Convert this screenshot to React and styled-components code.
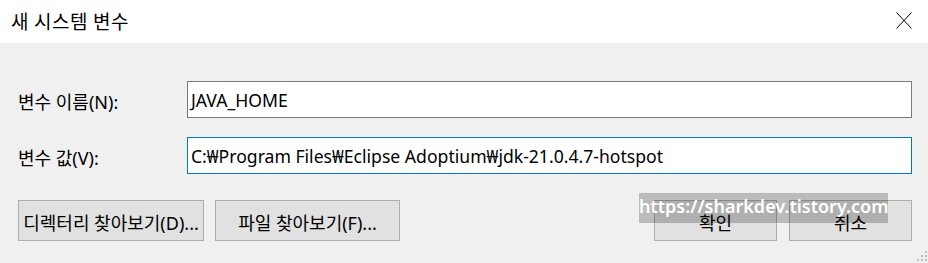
import React from 'react';
import styled, { createGlobalStyle } from 'styled-components';

const GlobalStyle = createGlobalStyle`
    html, body {
        margin: 0;
        padding: 0;
        background: #f0f0f0;
    }
    body {
        font-family: "Noto Sans", "Noto Sans CJK KR", sans-serif;
        color: #000;
    }
`;

const Window = styled.div`
    position: relative;
    width: 928px;
    height: 263px;
    display: flex;
    flex-direction: column;
    background: #f0f0f0;
    overflow: hidden;
`;

const TitleBar = styled.header`
    height: 43px;
    background: #fff;
    display: flex;
    align-items: center;
    justify-content: space-between;
    padding: 0 15px 0 11px;
    box-sizing: border-box;
`;

const Title = styled.span`
    font-family: "Noto Sans CJK KR", sans-serif;
    font-size: 19px;
    letter-spacing: 0.6px;
    margin-top: -2px;
`;

const CloseButton = styled.button`
    width: 18px;
    height: 18px;
    padding: 0;
    border: none;
    background: none;
    display: flex;
    align-items: center;
    justify-content: center;
    margin-top: -2px;
`;

const Body = styled.main`
    flex: 1;
    display: flex;
    flex-direction: column;
    padding: 38px 16px 0 18px;
`;

const FieldRow = styled.div`
    display: grid;
    grid-template-columns: 169px 1fr;
    align-items: center;
    height: 37px;
    margin-bottom: ${p => p.$gap}px;
`;

const Label = styled.label`
    font-size: 18px;
    font-family: "Noto Sans", "Noto Sans CJK KR", sans-serif;
    margin-top: 2px;
`;

const TextInput = styled.div`
    height: 37px;
    box-sizing: border-box;
    background: #fff;
    border: 1px solid ${p => (p.$focused ? '#0078d7' : '#7a7a7a')};
    display: flex;
    align-items: center;
    padding-left: 3px;
    font-size: 17.6px;
    white-space: nowrap;
    overflow: hidden;
`;

const ButtonRow = styled.div`
    display: flex;
    align-items: center;
    gap: 11px;
`;

const Spacer = styled.div`
    flex: 1;
`;

const Button = styled.button`
    width: ${p => p.$width}px;
    height: 41px;
    box-sizing: border-box;
    background: #e1e1e1;
    border: 1px solid #adadad;
    font-family: "Noto Sans", "Noto Sans CJK KR", sans-serif;
    font-size: 18px;
    color: #000;
    padding: 2px 0 0;
    white-space: nowrap;
    overflow: hidden;
`;

const Watermark = styled.div`
    position: absolute;
    left: 639px;
    top: 193px;
    width: 249px;
    height: 30px;
    background: rgba(0, 0, 0, 0.22);
    color: #fff;
    font-family: "Noto Sans", sans-serif;
    font-weight: 600;
    font-size: 18px;
    line-height: 26px;
    text-align: center;
    white-space: nowrap;
    pointer-events: none;
`;

const Grip = styled.svg`
    position: absolute;
    right: 0;
    bottom: 0;
`;

const gripDots = [
    [10, 0],
    [6, 4], [10, 4],
    [2, 8], [6, 8], [10, 8],
];

const App = () => (
    <>
        <GlobalStyle />
        <Window>
            <TitleBar>
                <Title>새 시스템 변수</Title>
                <CloseButton aria-label="닫기">
                    <svg width="16" height="17" viewBox="0 0 16 17">
                        <path d="M0.5 0.5 L15.5 16.5 M15.5 0.5 L0.5 16.5" stroke="#000" strokeWidth="1" fill="none" />
                    </svg>
                </CloseButton>
            </TitleBar>
            <Body>
                <FieldRow $gap={19}>
                    <Label>변수 이름(N):</Label>
                    <TextInput>JAVA_HOME</TextInput>
                </FieldRow>
                <FieldRow $gap={26}>
                    <Label>변수 값(V):</Label>
                    <TextInput $focused>C:₩Program Files₩Eclipse Adoptium₩jdk-21.0.4.7-hotspot</TextInput>
                </FieldRow>
                <ButtonRow>
                    <Button $width={186}>디렉터리 찾아보기(D)...</Button>
                    <Button $width={185}>파일 찾아보기(F)...</Button>
                    <Spacer />
                    <Button $width={123}>확인</Button>
                    <Button $width={123} style={{ marginLeft: 1 }}>취소</Button>
                </ButtonRow>
            </Body>
            <Watermark>https://sharkdev.tistory.com</Watermark>
            <Grip width="13" height="12" viewBox="0 0 13 12">
                {gripDots.map(([x, y]) => (
                    <rect key={`${x}-${y}`} x={x} y={y} width="2" height="2" fill="#bcbcbc" />
                ))}
            </Grip>
        </Window>
    </>
);

export default App;
